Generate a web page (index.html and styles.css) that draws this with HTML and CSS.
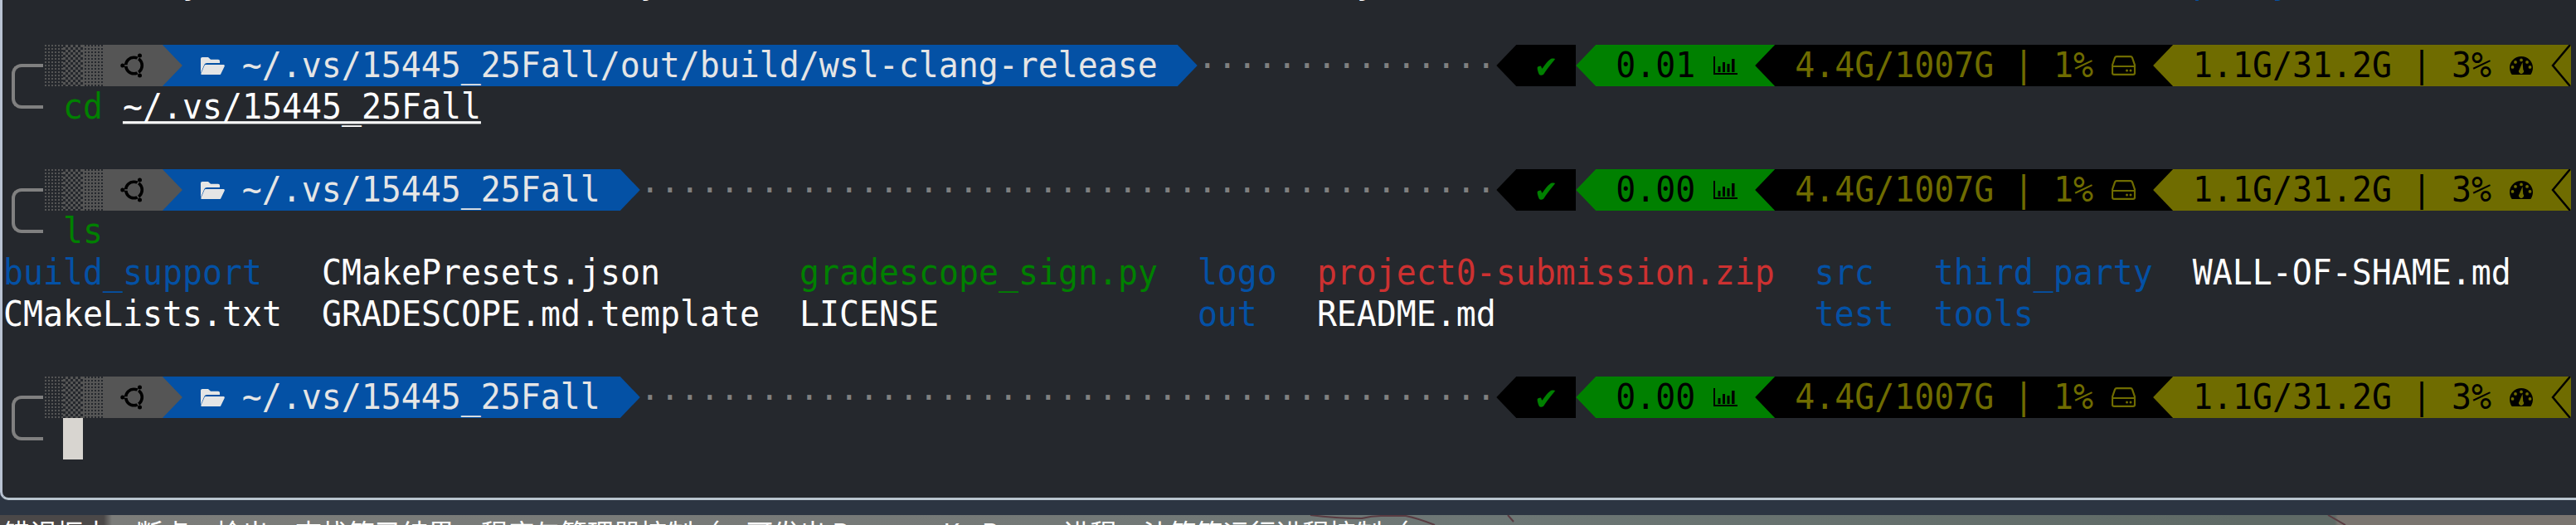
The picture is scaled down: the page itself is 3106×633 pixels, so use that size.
FILE: index.html
```html
<!DOCTYPE html>
<html lang="en">
<head>
<meta charset="utf-8">
<title>Terminal</title>
<link rel="stylesheet" href="styles.css">
</head>
<body>
<svg class="sprite" aria-hidden="true">
  <symbol id="ubuntu" viewBox="0 0 30 30">
    <circle cx="16.500" cy="15" r="9.800" fill="none" stroke="#000" stroke-width="3.600"/>
    <g fill="#555">
      <rect x="15.700" y="2" width="1.600" height="6" transform="rotate(-90 16.500 15)"/>
      <rect x="15.700" y="2" width="1.600" height="6" transform="rotate(30 16.500 15)"/>
      <rect x="15.700" y="2" width="1.600" height="6" transform="rotate(150 16.500 15)"/>
    </g>
    <circle cx="2.800" cy="15" r="2.500"/>
    <circle cx="23.500" cy="3" r="2.500"/>
    <circle cx="23.500" cy="27" r="2.500"/>
  </symbol>
  <symbol id="folder" viewBox="0 0 30 23">
    <path d="M1 20V3C1 1.800 1.800 1 3 1h7l3 2.800h9c1.200 0 2 .8 2 2V8H8.500C7 8 6 8.800 5.300 10z"/>
    <path d="M6.800 10h21.700c1 0 1.600 1 1.200 1.900l-4.600 9.500c-.3.500-.9.600-1.400.6H2.500c-1 0-1.400-.9-1-1.700l4-9.200c.3-.7.800-1.100 1.300-1.100z"/>
  </symbol>
  <symbol id="chart" viewBox="0 0 29 22">
    <path d="M1 0v21h28" fill="none" stroke="#000" stroke-width="2"/>
    <path d="M5.500 12h3v7h-3zM11 7h3v12h-3zM16.500 9h3v10h-3zM22 3h3.500v16H22z"/>
  </symbol>
  <symbol id="hdd" viewBox="0 0 29 24">
    <path d="M6 1.200h17c1 0 1.500.4 1.900 1.300L28 11.500V21c0 1.300-.8 1.900-2 1.900H3c-1.200 0-2-.6-2-1.900v-9.500l3.100-9C4.500 1.600 5 1.200 6 1.200zM1.500 13h26" fill="none" stroke="#6f6c00" stroke-width="2.200"/>
    <circle cx="18.500" cy="18" r="1.500" fill="#6f6c00"/>
    <circle cx="23" cy="18" r="1.500" fill="#6f6c00"/>
  </symbol>
  <symbol id="gauge" viewBox="0 0 28 22">
    <path fill-rule="evenodd" d="M14 0C6.300 0 0 6 0 13.500c0 3.200 1 6.200 2.700 8.500h22.600c1.700-2.300 2.700-5.300 2.700-8.500C28 6 21.700 0 14 0zM14 2.500a1.900 1.900 0 1 1 0 3.800 1.900 1.900 0 0 1 0-3.800zM7 5a1.900 1.900 0 1 1 0 3.800A1.900 1.900 0 0 1 7 5zm14 0a1.900 1.900 0 1 1 0 3.800A1.900 1.900 0 0 1 21 5zM3.500 11a1.900 1.900 0 1 1 0 3.800 1.900 1.900 0 0 1 0-3.800zm21 0a1.900 1.900 0 1 1 0 3.800 1.900 1.900 0 0 1 0-3.800zM15.500 7l.8 9a3 3 0 1 1-4.600 0z"/>
  </symbol>
</svg>

<main class="terminal">
  <div class="history"><div class="history-line">         <span class="white">y</span>                      <span class="white">y</span>                                   <span class="white">y</span>                                         <span class="blue">p</span>   <span class="blue">y</span></div></div>
  <div class="row"></div>

  <div class="row">
    <span class="rail"><i class="bend-top"></i></span>
    <span class="shade s1"></span><span class="shade s2"></span><span class="shade s3"></span>
    <span class="os"><span class="cell"></span><span class="cell"><svg class="ic-ubuntu"><use href="#ubuntu"/></svg></span><span class="cell"></span></span>
    <span class="tip on-blue from-gray"></span>
    <span class="path"><span class="cell"></span><span class="cell"><svg class="ic-folder"><use href="#folder"/></svg></span><span class="cell"></span><span class="t">~/.vs/15445_25Fall/out/build/wsl-clang-release </span></span>
    <span class="tip from-blue"></span>
    <span class="dots">···············</span>
    <span class="status">
      <span class="rtip to-black"></span>
      <span class="seg black"><span class="cell"></span><span class="t check">✔</span><span class="cell"></span></span>
      <span class="rtip to-green"></span>
      <span class="seg green"><span class="t"> 0.01 </span><span class="cell"><svg class="ic-chart"><use href="#chart"/></svg></span><span class="cell"></span></span>
      <span class="rtip on-green to-black"></span>
      <span class="seg black olive-text"><span class="t"> 4.4G/1007G | 1% </span><span class="cell"><svg class="ic-hdd"><use href="#hdd"/></svg></span><span class="cell"></span></span>
      <span class="rtip on-black to-olive"></span>
      <span class="seg olive"><span class="t"> 1.1G/31.2G | 3% </span><span class="cell"><svg class="ic-gauge"><use href="#gauge"/></svg></span><span class="cell"></span></span>
      <span class="end-cap"><svg class="ic-cap" viewBox="0 0 24 50" preserveAspectRatio="none"><path d="M23 0L2 25l21 25" fill="none" stroke="#000" stroke-width="2.500"/></svg></span>
    </span>
  </div>
  <div class="row">
    <span class="rail"><i class="bend-bottom"></i></span>
    <span class="cell"></span><span class="t green-text">cd</span><span class="cell"></span><span class="t white link">~/.vs/15445_25Fall</span>
  </div>
  <div class="row"></div>

  <div class="row">
    <span class="rail"><i class="bend-top"></i></span>
    <span class="shade s1"></span><span class="shade s2"></span><span class="shade s3"></span>
    <span class="os"><span class="cell"></span><span class="cell"><svg class="ic-ubuntu"><use href="#ubuntu"/></svg></span><span class="cell"></span></span>
    <span class="tip on-blue from-gray"></span>
    <span class="path"><span class="cell"></span><span class="cell"><svg class="ic-folder"><use href="#folder"/></svg></span><span class="cell"></span><span class="t">~/.vs/15445_25Fall </span></span>
    <span class="tip from-blue"></span>
    <span class="dots">···········································</span>
    <span class="status">
      <span class="rtip to-black"></span>
      <span class="seg black"><span class="cell"></span><span class="t check">✔</span><span class="cell"></span></span>
      <span class="rtip to-green"></span>
      <span class="seg green"><span class="t"> 0.00 </span><span class="cell"><svg class="ic-chart"><use href="#chart"/></svg></span><span class="cell"></span></span>
      <span class="rtip on-green to-black"></span>
      <span class="seg black olive-text"><span class="t"> 4.4G/1007G | 1% </span><span class="cell"><svg class="ic-hdd"><use href="#hdd"/></svg></span><span class="cell"></span></span>
      <span class="rtip on-black to-olive"></span>
      <span class="seg olive"><span class="t"> 1.1G/31.2G | 3% </span><span class="cell"><svg class="ic-gauge"><use href="#gauge"/></svg></span><span class="cell"></span></span>
      <span class="end-cap"><svg class="ic-cap" viewBox="0 0 24 50" preserveAspectRatio="none"><path d="M23 0L2 25l21 25" fill="none" stroke="#000" stroke-width="2.500"/></svg></span>
    </span>
  </div>
  <div class="row">
    <span class="rail"><i class="bend-bottom"></i></span>
    <span class="cell"></span><span class="t green-text">ls</span>
  </div>
  <div class="row"><span class="t"><span class="blue">build_support</span>   <span class="white">CMakePresets.json</span>       <span class="green-text">gradescope_sign.py</span>  <span class="blue">logo</span>  <span class="red">project0-submission.zip</span>  <span class="blue">src</span>   <span class="blue">third_party</span>  <span class="white">WALL-OF-SHAME.md</span></span></div>
  <div class="row"><span class="t"><span class="white">CMakeLists.txt</span>  <span class="white">GRADESCOPE.md.template</span>  <span class="white">LICENSE</span>             <span class="blue">out</span>   <span class="white">README.md</span>                <span class="blue">test</span>  <span class="blue">tools</span></span></div>
  <div class="row"></div>

  <div class="row">
    <span class="rail"><i class="bend-top"></i></span>
    <span class="shade s1"></span><span class="shade s2"></span><span class="shade s3"></span>
    <span class="os"><span class="cell"></span><span class="cell"><svg class="ic-ubuntu"><use href="#ubuntu"/></svg></span><span class="cell"></span></span>
    <span class="tip on-blue from-gray"></span>
    <span class="path"><span class="cell"></span><span class="cell"><svg class="ic-folder"><use href="#folder"/></svg></span><span class="cell"></span><span class="t">~/.vs/15445_25Fall </span></span>
    <span class="tip from-blue"></span>
    <span class="dots">···········································</span>
    <span class="status">
      <span class="rtip to-black"></span>
      <span class="seg black"><span class="cell"></span><span class="t check">✔</span><span class="cell"></span></span>
      <span class="rtip to-green"></span>
      <span class="seg green"><span class="t"> 0.00 </span><span class="cell"><svg class="ic-chart"><use href="#chart"/></svg></span><span class="cell"></span></span>
      <span class="rtip on-green to-black"></span>
      <span class="seg black olive-text"><span class="t"> 4.4G/1007G | 1% </span><span class="cell"><svg class="ic-hdd"><use href="#hdd"/></svg></span><span class="cell"></span></span>
      <span class="rtip on-black to-olive"></span>
      <span class="seg olive"><span class="t"> 1.1G/31.2G | 3% </span><span class="cell"><svg class="ic-gauge"><use href="#gauge"/></svg></span><span class="cell"></span></span>
      <span class="end-cap"><svg class="ic-cap" viewBox="0 0 24 50" preserveAspectRatio="none"><path d="M23 0L2 25l21 25" fill="none" stroke="#000" stroke-width="2.500"/></svg></span>
    </span>
  </div>
  <div class="row">
    <span class="rail"><i class="bend-bottom"></i></span>
    <span class="cell"></span><span class="cursor"></span>
  </div>
</main>
<div class="titlebar"></div>
<div class="wallpaper">
  <svg class="strokes" viewBox="0 0 3106 12" aria-hidden="true"><path d="M1580 0q30 4 62 4q12-3 23-3h30q15 3 35 11M1818 0l7 8M2807 0l21 12" fill="none" stroke="#5a3c42" stroke-width="2"/></svg>
  <p class="caption">错误框中、断点、检出、查找等已结果、程序与管理器控制（、可发出 Bazaar、Ku Buntu 进程、沙箱等运行进程控制（</p>
</div>
</body>
</html>
```
FILE: styles.css
```css
html, body {
  margin: 0;
  height: 633px;
  overflow: hidden;
  background: #2c3542;
}

.sprite {
  display: none;
}

.terminal {
  box-sizing: border-box;
  height: 603px;
  padding: 0 0 0 1px;
  overflow: hidden;
  background: #25282d;
  border-left: 3px solid #b9c3d2;
  border-bottom: 3px solid #b9c5ce;
  border-bottom-left-radius: 10px;
  font-family: "DejaVu Sans Mono", monospace;
  font-size: 39.87px;
  line-height: 50px;
  color: #e5e5e5;
}

.history {
  height: 4px;
  overflow: hidden;
}

.history-line {
  margin-top: -46px;
  height: 50px;
  white-space: pre;
}

.row {
  display: flex;
  height: 50px;
  white-space: pre;
}

.t {
  display: inline-block;
  white-space: pre;
  transform: scaleY(1.06);
  transform-origin: 0 78%;
}

.cell {
  display: flex;
  flex: none;
  width: 1ch;
  height: 50px;
  align-items: center;
  justify-content: center;
}

.rail {
  display: flex;
  flex: none;
  box-sizing: border-box;
  width: 2ch;
  height: 50px;
  padding-left: 10px;
}

.bend-top,
.bend-bottom {
  display: block;
  flex: 1;
  box-sizing: border-box;
  height: 27px;
  border-left: 4px solid #808080;
}

.bend-top {
  margin-top: 23px;
  border-top: 4px solid #808080;
  border-top-left-radius: 12px;
}

.bend-bottom {
  border-bottom: 4px solid #808080;
  border-bottom-left-radius: 12px;
}

.shade {
  flex: none;
  width: 1ch;
  height: 50px;
}

.s1 {
  background: conic-gradient(#555 25%, transparent 0) 0 0 / 4px 4px;
}

.s2 {
  background: repeating-conic-gradient(#555 0 25%, transparent 0 50%) 0 0 / 6px 6px;
}

.s3 {
  background: conic-gradient(transparent 25%, #555 0) 0 0 / 4px 4px;
}

.os {
  display: flex;
  flex: none;
  background: #555;
}

.path {
  display: flex;
  flex: none;
  background: #0451a5;
}

.tip,
.rtip {
  flex: none;
  display: block;
  width: 1ch;
  height: 50px;
}

.tip::before,
.rtip::before {
  content: "";
  display: block;
  height: 100%;
}

.tip::before {
  clip-path: polygon(0 0, 100% 50%, 0 100%);
}

.rtip::before {
  clip-path: polygon(100% 0, 0 50%, 100% 100%);
}

.on-blue { background: #0451a5; }
.on-green { background: #008000; }
.on-black { background: #000; }
.from-gray::before { background: #555; }
.from-blue::before { background: #0451a5; }
.to-black::before { background: #000; }
.to-green::before { background: #008000; }
.to-olive::before { background: #6f6c00; }

.dots {
  flex: 1;
  color: #808080;
  overflow: hidden;
}

.status {
  display: flex;
  flex: none;
  margin-right: 6px;
}

.seg {
  display: flex;
  flex: none;
}

.black { background: #000; }
.green { background: #008000; color: #000; }
.olive { background: #6f6c00; color: #000; }
.olive-text { color: #6f6c00; }
.check { color: #008000; }

.end-cap {
  display: flex;
  flex: none;
  width: 1ch;
  height: 50px;
  background: #6f6c00;
}

.ic-cap {
  width: 100%;
  height: 100%;
}

svg {
  display: block;
  flex: none;
}

.ic-ubuntu { width: 30px; height: 30px; }
.ic-folder { width: 30px; height: 23px; fill: #e5e5e5; }
.ic-chart { width: 29px; height: 22px; }
.ic-hdd { width: 29px; height: 24px; }
.ic-gauge { width: 28px; height: 22px; }

.white { color: #fff; }
.blue { color: #0451a5; }
.red { color: #cd3131; }
.green-text { color: #008000; }

.link {
  text-decoration: underline;
  text-decoration-thickness: 3px;
  text-underline-offset: 3px;
}

.cursor {
  flex: none;
  width: 1ch;
  height: 50px;
  background: #d8d5d0;
}

.titlebar {
  height: 18px;
  background: #2c3542;
}

.wallpaper {
  position: relative;
  height: 12px;
  overflow: hidden;
  background: linear-gradient(90deg, #4b4848 0, #4b4848 125px, #7c7d7a 135px, #777a78 1000px, #6d7775 1800px, #5f6a66 2700px, #5f6a66 2815px, #7a7570 2819px, #7a7570 100%);
}

.strokes {
  position: absolute;
  left: 0;
  top: 0;
  width: 3106px;
  height: 12px;
}

.caption {
  position: relative;
  margin: 0;
  padding: 0 0 0 4px;
  font-family: "Noto Sans CJK SC", sans-serif;
  font-size: 32px;
  line-height: 40px;
  white-space: nowrap;
  color: #fff;
}
```
